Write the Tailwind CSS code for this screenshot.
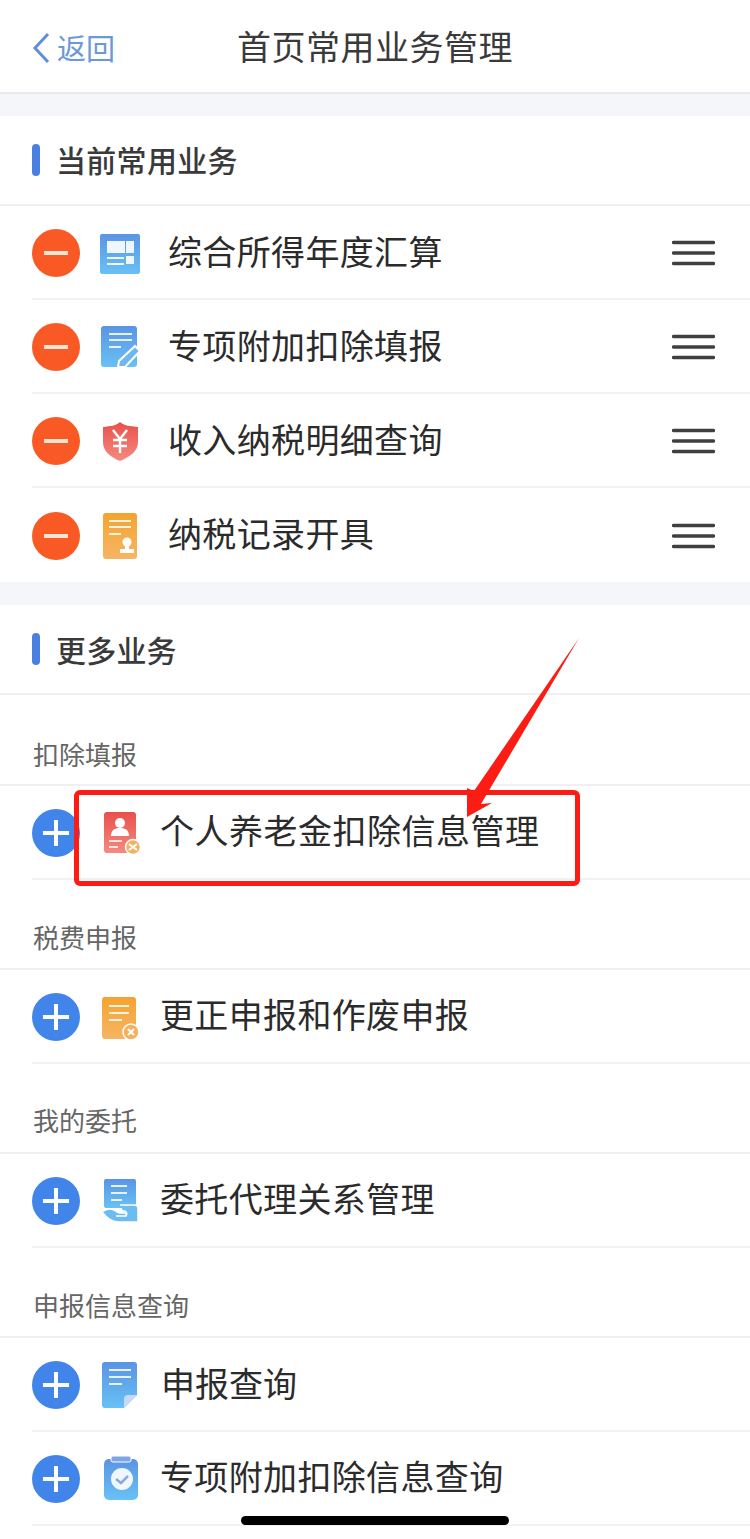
<!DOCTYPE html>
<html lang="zh-CN">
  <head>
    <meta charset="UTF-8" />
    <meta name="viewport" content="width=device-width, initial-scale=1.0" />
    <title>首页常用业务管理</title>
    <script src="https://cdn.jsdelivr.net/npm/@tailwindcss/browser@4"></script>
  </head>
  <body class="relative w-[750px] h-[1539px] overflow-hidden bg-white text-[#2b2b2b] [font-family:'Noto_Sans_CJK_SC','Liberation_Sans',sans-serif]">
    <!-- shared gradients -->
    <svg class="absolute w-0 h-0">
      <defs>
        <linearGradient id="blue" x1="0" y1="0" x2="0" y2="1"><stop offset="0" stop-color="#5a94e4" /><stop offset="1" stop-color="#68c1f5" /></linearGradient>
        <linearGradient id="red" x1="0" y1="0" x2="0" y2="1"><stop offset="0" stop-color="#e9504c" /><stop offset="1" stop-color="#f58a80" /></linearGradient>
        <linearGradient id="orange" x1="0" y1="0" x2="0" y2="1"><stop offset="0" stop-color="#f5a32f" /><stop offset="1" stop-color="#f6b565" /></linearGradient>
      </defs>
    </svg>

    <!-- header -->
    <header class="h-[94px] border-b-2 border-[#e8e9eb] grid grid-cols-[1fr_auto_1fr] items-center px-8">
      <div class="flex items-center gap-[7px] text-[#6b98d6] text-[29px] mt-[3px]">
        <svg class="w-[18px] h-[32px]" viewBox="0 0 18 32" fill="none" stroke="#5f90d6" stroke-width="3"><path d="M16 2 L3 16 L16 30" /></svg>
        <span>返回</span>
      </div>
      <h1 class="text-[34px] tracking-[0.5px] text-[#3a3a3a] -mt-[2px]">首页常用业务管理</h1>
      <div></div>
    </header>
    <div class="h-[22px] bg-[#f4f6f9]"></div>

    <!-- current -->
    <section>
      <div class="h-[90px] border-b-2 border-[#f0f0f0] flex items-center gap-[16px] pl-8">
        <span class="w-2 h-8 rounded bg-[#4a80e2]"></span>
        <h2 class="text-[30px] font-medium tracking-[0.3px] text-[#3a3a3a] -mt-[2px]">当前常用业务</h2>
      </div>

      <div class="h-[94px] pl-8">
        <div class="h-full pt-[2px] border-b-2 border-[#f2f2f2] flex items-center">
          <span class="w-12 h-12 rounded-full bg-[#f95a25] flex items-center justify-center"><span class="w-6 h-1 bg-[#fde3d3]"></span></span>
          <svg class="ml-[18px] w-[44px] h-[48px]" viewBox="0 0 44 48"><rect x="2" y="5" width="40" height="40" rx="2" fill="url(#blue)" /><path fill="#fff" fill-opacity=".9" d="M9 12h18v12H9zM28 12h8v12h-8zM28 27h8v8h-8zM9 28h17v2H9zM9 34h17v2H9z" /></svg>
          <span class="ml-[26px] text-[34px] tracking-[0.35px] -mt-[6px]">综合所得年度汇算</span>
          <svg class="ml-auto mr-[35px] w-[43px] h-[26px]" viewBox="0 0 43 26" stroke="#3f3f3f" stroke-width="3.500" stroke-linecap="round"><path d="M1.500 2.500h40M1.500 13h40M1.500 23.500h40" /></svg>
        </div>
      </div>

      <div class="h-[94px] pl-8">
        <div class="h-full pt-[2px] border-b-2 border-[#f2f2f2] flex items-center">
          <span class="w-12 h-12 rounded-full bg-[#f95a25] flex items-center justify-center"><span class="w-6 h-1 bg-[#fde3d3]"></span></span>
          <svg class="ml-[18px] w-[44px] h-[48px]" viewBox="0 0 44 48"><path fill="url(#blue)" d="M6 3h30a3 3 0 0 1 3 3v35a3 3 0 0 1-3 3H6a3 3 0 0 1-3-3V6a3 3 0 0 1 3-3z" /><path stroke="#fff" stroke-opacity=".85" stroke-width="2" d="M11 11h23M11 17h23M11 24h12" /><path fill="#6fb7f0" stroke="#fff" stroke-width="2" d="M37 23l5 5-15 16h-7l1-6z" /></svg>
          <span class="ml-[26px] text-[34px] tracking-[0.35px] -mt-[6px]">专项附加扣除填报</span>
          <svg class="ml-auto mr-[35px] w-[43px] h-[26px]" viewBox="0 0 43 26" stroke="#3f3f3f" stroke-width="3.500" stroke-linecap="round"><path d="M1.500 2.500h40M1.500 13h40M1.500 23.500h40" /></svg>
        </div>
      </div>

      <div class="h-[94px] pl-8">
        <div class="h-full pt-[2px] border-b-2 border-[#f2f2f2] flex items-center">
          <span class="w-12 h-12 rounded-full bg-[#f95a25] flex items-center justify-center"><span class="w-6 h-1 bg-[#fde3d3]"></span></span>
          <svg class="ml-[18px] w-[44px] h-[48px]" viewBox="0 0 44 48"><path fill="url(#red)" d="M22 5c4 4 10 4 18 5v15c0 9-8 15-18 19C12 40 5 34 5 25V10c8-1 13-1 17-5z" /><path fill="none" stroke="#fff" stroke-width="2.500" d="M15 13l7 9 7-9M22 22v14M15 23h14M15 29h14" /></svg>
          <span class="ml-[26px] text-[34px] tracking-[0.35px] -mt-[6px]">收入纳税明细查询</span>
          <svg class="ml-auto mr-[35px] w-[43px] h-[26px]" viewBox="0 0 43 26" stroke="#3f3f3f" stroke-width="3.500" stroke-linecap="round"><path d="M1.500 2.500h40M1.500 13h40M1.500 23.500h40" /></svg>
        </div>
      </div>

      <div class="h-[94px] pl-8">
        <div class="h-full pt-[2px] flex items-center">
          <span class="w-12 h-12 rounded-full bg-[#f95a25] flex items-center justify-center"><span class="w-6 h-1 bg-[#fde3d3]"></span></span>
          <svg class="ml-[18px] w-[44px] h-[48px]" viewBox="0 0 44 48"><rect x="5" y="1" width="34" height="46" rx="3" fill="url(#orange)" /><path stroke="#fff" stroke-opacity=".85" stroke-width="2" d="M11 9h22M11 15h22M11 22h12" /><circle cx="29" cy="30" r="4.500" fill="#fff" /><path fill="#fff" d="M27 33h4v4h-4zM22 37h14v4H22z" /></svg>
          <span class="ml-[26px] text-[34px] tracking-[0.35px] -mt-[8px]">纳税记录开具</span>
          <svg class="ml-auto mr-[35px] w-[43px] h-[26px]" viewBox="0 0 43 26" stroke="#3f3f3f" stroke-width="3.500" stroke-linecap="round"><path d="M1.500 2.500h40M1.500 13h40M1.500 23.500h40" /></svg>
        </div>
      </div>
    </section>
    <div class="h-[23px] bg-[#f4f6f9]"></div>

    <!-- more -->
    <section>
      <div class="h-[90px] border-b-2 border-[#f0f0f0] flex items-center gap-[16px] pl-8">
        <span class="w-2 h-8 rounded bg-[#4a80e2]"></span>
        <h2 class="text-[30px] font-medium tracking-[0.2px] text-[#3a3a3a]">更多业务</h2>
      </div>

      <div class="h-[91px] border-b-2 border-[#f0f0f0] flex items-end pb-[13px] pl-[33px] text-[26px] leading-[34px] text-[#666]">扣除填报</div>
      <div class="h-[94px] pl-8">
        <div class="h-full pt-[2px] border-b-2 border-[#f2f2f2] flex items-center">
          <span class="w-12 h-12 rounded-full bg-[#4285ea] flex items-center justify-center relative"><span class="absolute w-[26px] h-1 bg-white"></span><span class="absolute w-1 h-[26px] bg-white"></span></span>
          <svg class="ml-[18px] w-[44px] h-[48px]" viewBox="0 0 44 48"><rect x="6" y="3" width="32" height="41" rx="3" fill="url(#red)" /><circle cx="22" cy="14" r="5" fill="#fff" /><path fill="#fff" d="M13 27c0-6 4-8 9-8s9 2 9 8z" /><path stroke="#fff" stroke-opacity=".8" stroke-width="2" d="M11 32h13M11 38h9" /><circle cx="35" cy="38" r="7.500" fill="#f2b25f" stroke="#fff" stroke-width="1.500" /><path stroke="#fff" stroke-width="2" d="M31 35l8 6M39 35l-8 6" /></svg>
          <span class="ml-[18px] text-[34px] tracking-[0.5px] -mt-[8px]">个人养老金扣除信息管理</span>
        </div>
      </div>

      <div class="h-[90px] border-b-2 border-[#f0f0f0] flex items-end pb-[14px] pl-[33px] text-[26px] leading-[34px] text-[#666]">税费申报</div>
      <div class="h-[94px] pl-8">
        <div class="h-full pt-[2px] border-b-2 border-[#f2f2f2] flex items-center">
          <span class="w-12 h-12 rounded-full bg-[#4285ea] flex items-center justify-center relative"><span class="absolute w-[26px] h-1 bg-white"></span><span class="absolute w-1 h-[26px] bg-white"></span></span>
          <svg class="ml-[18px] w-[44px] h-[48px]" viewBox="0 0 44 48"><rect x="4" y="4" width="34" height="42" rx="3" fill="url(#orange)" /><path stroke="#fff" stroke-opacity=".85" stroke-width="2" d="M11 13h20M11 20h20M11 27h13" /><circle cx="33" cy="39" r="8" fill="#f2b25f" stroke="#fff" stroke-width="1.500" /><path stroke="#fff" stroke-width="2" d="M30 36l6 6M36 36l-6 6" /></svg>
          <span class="ml-[18px] text-[34px] tracking-[0.35px] -mt-[8px]">更正申报和作废申报</span>
        </div>
      </div>

      <div class="h-[90px] border-b-2 border-[#f0f0f0] flex items-end pb-[15px] pl-[33px] text-[26px] leading-[34px] text-[#666]">我的委托</div>
      <div class="h-[94px] pl-8">
        <div class="h-full pt-[2px] border-b-2 border-[#f2f2f2] flex items-center">
          <span class="w-12 h-12 rounded-full bg-[#4285ea] flex items-center justify-center relative"><span class="absolute w-[26px] h-1 bg-white"></span><span class="absolute w-1 h-[26px] bg-white"></span></span>
          <svg class="ml-[18px] w-[44px] h-[48px]" viewBox="0 0 44 48"><path fill="url(#blue)" d="M8 2h28a2 2 0 0 1 2 2v27H8a2 2 0 0 1-2-2V4a2 2 0 0 1 2-2z" /><path stroke="#fff" stroke-opacity=".85" stroke-width="2" d="M13 9h16M13 16h16M13 23h11" /><path fill="#6cbcf0" stroke="#fff" stroke-width="1.500" d="M22 28H36Q40 28 40 32V45H20Q12 45 4 35Q10 30 16 33L21 36H28V39" /><path fill="none" stroke="#fff" stroke-width="1.500" d="M18 39h10q2-3-1-5h-5" /></svg>
          <span class="ml-[18px] text-[34px] tracking-[0.35px] -mt-[8px]">委托代理关系管理</span>
        </div>
      </div>

      <div class="h-[90px] border-b-2 border-[#f0f0f0] flex items-end pb-[14px] pl-[33px] text-[26px] leading-[34px] text-[#666]">申报信息查询</div>
      <div class="h-[94px] pl-8">
        <div class="h-full pt-[2px] border-b-2 border-[#f2f2f2] flex items-center">
          <span class="w-12 h-12 rounded-full bg-[#4285ea] flex items-center justify-center relative"><span class="absolute w-[26px] h-1 bg-white"></span><span class="absolute w-1 h-[26px] bg-white"></span></span>
          <svg class="ml-[18px] w-[44px] h-[48px]" viewBox="0 0 44 48"><path fill="url(#blue)" d="M7 1h29a3 3 0 0 1 3 3v30L26 47H7a3 3 0 0 1-3-3V4a3 3 0 0 1 3-3z" /><path fill="#c9d9f5" d="M39 34 26 47v-9a4 4 0 0 1 4-4z" /><path stroke="#fff" stroke-opacity=".85" stroke-width="2" d="M11 9h22M11 16h22M11 23h13" /></svg>
          <span class="ml-[19px] text-[34px] tracking-[0px] -mt-[6px]">申报查询</span>
        </div>
      </div>

      <div class="h-[94px] pl-8">
        <div class="h-full pt-[2px] border-b-2 border-[#f2f2f2] flex items-center">
          <span class="w-12 h-12 rounded-full bg-[#4285ea] flex items-center justify-center relative"><span class="absolute w-[26px] h-1 bg-white"></span><span class="absolute w-1 h-[26px] bg-white"></span></span>
          <svg class="ml-[18px] w-[44px] h-[48px]" viewBox="0 0 44 48"><rect x="6" y="4" width="34" height="41" rx="5" fill="url(#blue)" /><rect x="13" y="1" width="20" height="6" rx="2" fill="#7ca6e6" stroke="#fff" /><circle cx="24" cy="24" r="11" fill="#fff" fill-opacity=".9" /><path fill="none" stroke="#8aa9d8" stroke-width="2.500" d="M18 24l5 4 7-7" /></svg>
          <span class="ml-[18px] text-[34px] tracking-[0.35px] -mt-[8px]">专项附加扣除信息查询</span>
        </div>
      </div>
    </section>

    <!-- annotation drawn over the screenshot -->
    <div class="absolute left-[74px] top-[790px] w-[506px] h-[96px] border-[5px] border-[#fd1c14] rounded-md"></div>
    <svg class="absolute left-[460px] top-[630px] w-[125px] h-[195px]" viewBox="460 630 125 195"><polygon fill="#fd1c14" points="579,638 474,791 467,788 467,817 492,803 481,804" /></svg>

    <!-- home bar -->
    <div class="absolute left-[241px] top-[1516px] w-[268px] h-[9px] rounded-full bg-black"></div>
  </body>
</html>
